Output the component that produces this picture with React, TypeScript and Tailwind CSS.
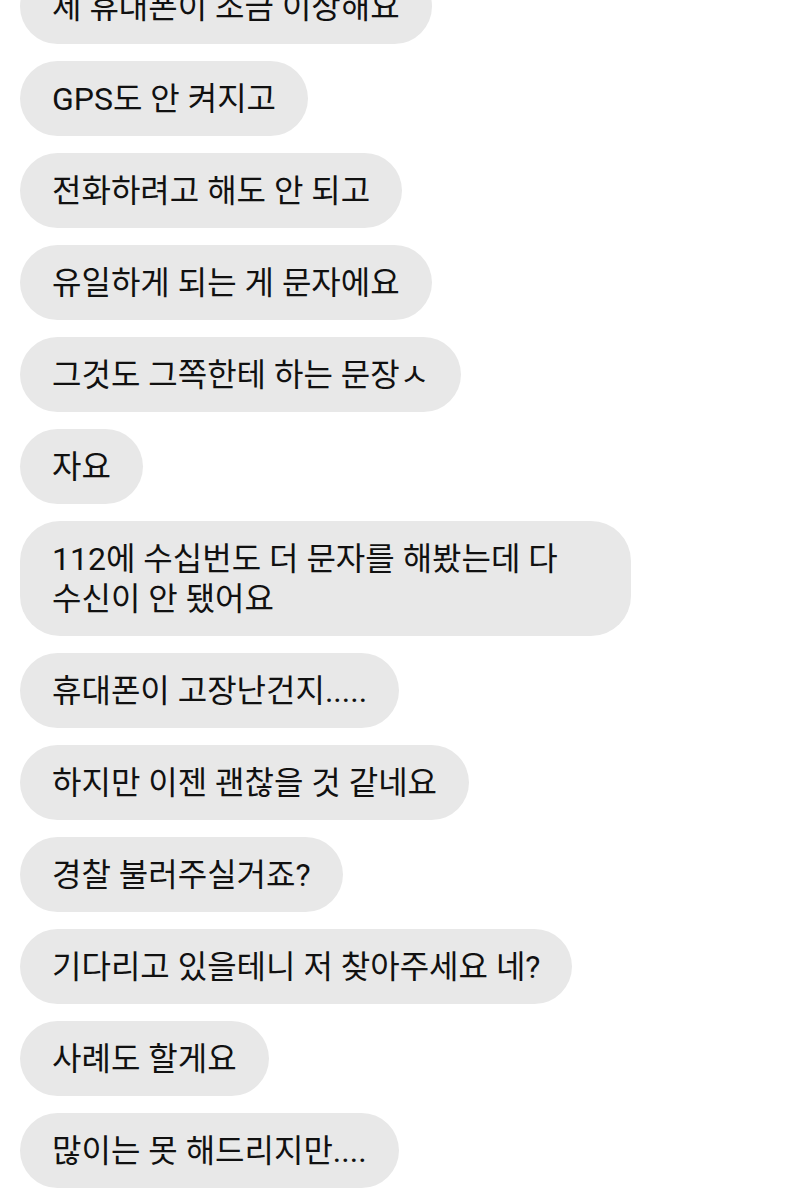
import React from "react";

const messages: { text: React.ReactNode; wide?: boolean }[] = [
  { text: "세 휴대폰이 조금 이상해요" },
  { text: "GPS도 안 켜지고" },
  { text: "전화하려고 해도 안 되고" },
  { text: "유일하게 되는 게 문자에요" },
  { text: "그것도 그쪽한테 하는 문장ㅅ" },
  { text: "자요" },
  {
    text: (
      <>
        112에 수십번도 더 문자를 해봤는데 다
        <br />
        수신이 안 됐어요
      </>
    ),
    wide: true,
  },
  { text: "휴대폰이 고장난건지....." },
  { text: "하지만 이젠 괜찮을 것 같네요" },
  { text: "경찰 불러주실거죠?" },
  { text: "기다리고 있을테니 저 찾아주세요 네?" },
  { text: "사례도 할게요" },
  { text: "많이는 못 해드리지만...." },
];

export default function App() {
  return (
    <div
      className="w-[800px] h-[1200px] overflow-hidden bg-white"
      style={{ fontFamily: 'Roboto, "Noto Sans CJK KR", sans-serif' }}
    >
      <div className="flex flex-col items-start gap-[17px] -mt-[31px] pl-[20px]">
        {messages.map((m, i) => (
          <div
            key={i}
            className={`bg-[#e8e8e8] text-[#111111] text-[32px] leading-[40px] py-[17.5px] px-[32px] ${
              m.wide ? "w-[611px] rounded-[40px]" : "rounded-full"
            }`}
          >
            {m.text}
          </div>
        ))}
      </div>
    </div>
  );
}
